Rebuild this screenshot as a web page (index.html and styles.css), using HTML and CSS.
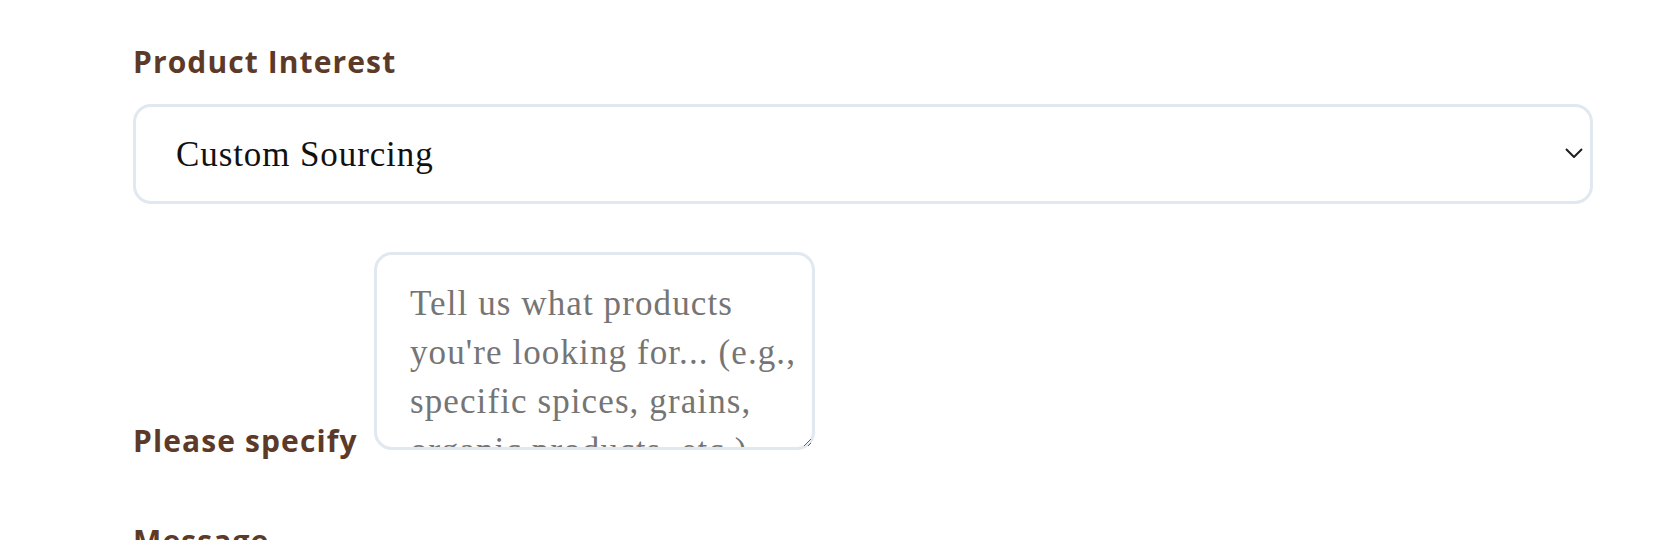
FILE: index.html
```html
<!DOCTYPE html>
<html lang="en">
<head>
<meta charset="utf-8">
<title>Product Interest</title>
<link rel="stylesheet" href="styles.css">
</head>
<body>
<form class="form">
  <div class="group">
    <label class="label" for="interest">Product Interest</label>
    <div class="select-wrap">
      <select class="select" id="interest">
        <option>Custom Sourcing</option>
      </select>
      <svg class="chevron" width="18" height="10" viewBox="0 0 18 10" aria-hidden="true">
        <path d="M1 1 L9 9 L17 1" fill="none" stroke="#1f1f1f" stroke-width="2"/>
      </svg>
    </div>
  </div>
  <div class="group group-inline">
    <label class="label label-inline" for="specify">Please specify</label>
    <textarea class="textarea" id="specify" placeholder="Tell us what products&#10;you're looking for... (e.g.,&#10;specific spices, grains,&#10;organic products, etc.)"></textarea>
  </div>
  <div class="group group-last">
    <label class="label" for="message">Message</label>
  </div>
</form>
</body>
</html>
```

FILE: styles.css
```css
html, body {
  margin: 0;
  padding: 0;
  background: #ffffff;
}

.form {
  display: flex;
  flex-direction: column;
  padding: 40px 0 0 133px;
  width: 1460px;
}

.group {
  display: flex;
  flex-direction: column;
}

.label {
  font-family: "Open Sans", "Noto Sans", sans-serif;
  font-weight: 700;
  font-size: 30px;
  line-height: 44px;
  letter-spacing: 1.1px;
  color: #5d3a27;
  margin-bottom: 20px;
}

.select-wrap {
  position: relative;
  width: 1460px;
}

.select {
  appearance: none;
  -webkit-appearance: none;
  box-sizing: border-box;
  width: 100%;
  height: 100px;
  margin: 0;
  padding: 0 60px 0 40px;
  border: 3px solid #e2e8f0;
  border-radius: 18px;
  background: #ffffff;
  font-family: "Liberation Serif", serif;
  font-size: 35px;
  letter-spacing: 0.9px;
  color: #111111;
  outline: none;
}

.chevron {
  position: absolute;
  right: 10px;
  top: 44px;
  pointer-events: none;
}

.group-inline {
  flex-direction: row;
  align-items: flex-end;
  gap: 10px;
  margin-top: 48px;
}

.label-inline {
  margin-bottom: 0;
  min-width: 231px;
}

.textarea {
  box-sizing: border-box;
  width: 441px;
  height: 198px;
  margin: 0 0 13px 0;
  padding: 24px 0 0 33px;
  border: 3px solid #e2e8f0;
  border-radius: 18px;
  font-family: "Liberation Serif", serif;
  font-size: 35px;
  line-height: 49px;
  letter-spacing: 1.1px;
  color: #111111;
  background: #ffffff;
  outline: none;
  overflow: hidden;
}

.textarea::placeholder {
  color: #757575;
  opacity: 1;
}

.group-last {
  margin-top: 56px;
}
```
